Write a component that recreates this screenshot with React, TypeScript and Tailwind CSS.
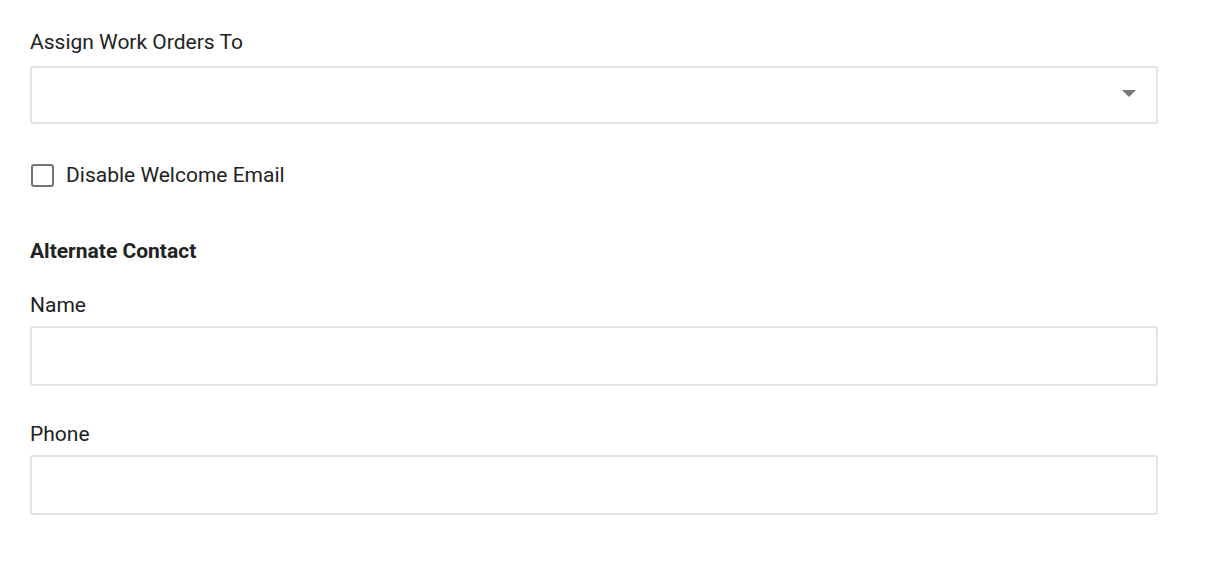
const Field = ({ label }: { label: string }) => (
  <div className="flex flex-col">
    <label className="text-[21px] leading-[28px] text-[#222]">{label}</label>
    <input
      type="text"
      className="mt-[7px] h-[60px] w-full rounded-[3px] border-2 border-[#e2e2e2] bg-white px-3 outline-none"
    />
  </div>
);

export default function App() {
  return (
    <div className="min-h-screen bg-white font-['Roboto',sans-serif] text-[#222]">
      <div className="w-[1128px] ml-[30px] pt-[28px]">
        <label className="block text-[21px] leading-[28px]">Assign Work Orders To</label>
        <div className="mt-[10px] flex h-[58px] w-full items-center justify-end rounded-[3px] border-2 border-[#e2e2e2] bg-white pr-[20px]">
          <svg width="14" height="8" viewBox="0 0 14 8" className="-mt-[2px]">
            <path d="M0 0 L14 0 L7 7 Z" fill="#777" />
          </svg>
        </div>

        <div className="mt-[37px] flex items-center gap-[12px]">
          <span className="ml-[1px] h-[23px] w-[23px] rounded-[3px] border-2 border-[#757575] bg-white" />
          <span className="text-[21px] leading-[28px]">Disable Welcome Email</span>
        </div>

        <h3 className="mt-[48px] text-[21px] font-bold leading-[28px]">Alternate Contact</h3>

        <div className="mt-[26px]">
          <Field label="Name" />
        </div>
        <div className="mt-[34px]">
          <Field label="Phone" />
        </div>
      </div>
    </div>
  );
}
